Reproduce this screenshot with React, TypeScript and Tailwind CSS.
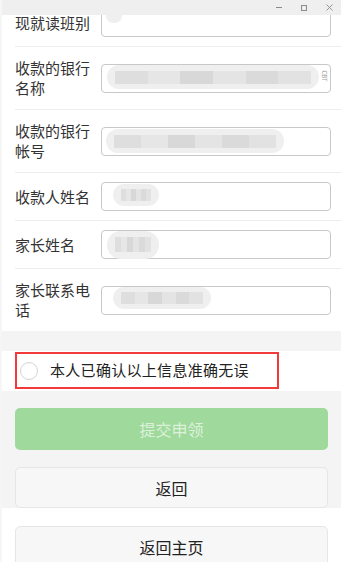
import React from 'react';

type Row = { label: string[]; blur: { w: number; h: number; ml: number; mt?: number }; cbt?: boolean };

const ROWS: Row[] = [
  { label: ['现就读班别'], blur: { w: 16, h: 14, ml: 4, mt: -14 } },
  { label: ['收款的银行', '名称'], blur: { w: 212, h: 24, ml: 5, mt: -2 }, cbt: true },
  { label: ['收款的银行', '帐号'], blur: { w: 178, h: 24, ml: 4 } },
  { label: ['收款人姓名'], blur: { w: 46, h: 22, ml: 11, mt: -4 } },
  { label: ['家长姓名'], blur: { w: 52, h: 28, ml: 5 } },
  { label: ['家长联系电', '话'], blur: { w: 98, h: 22, ml: 11, mt: -4 } },
];

function Blur({ w, h, ml, mt = 0 }: Row['blur']) {
  return (
    <div
      className="relative rounded-full bg-[#efefef] blur-[0.6px] flex items-center px-[8px]"
      style={{ width: w, height: h, marginLeft: ml, marginTop: mt }}
    >
      <div className="w-full flex" style={{ height: Math.max(6, Math.round(h * 0.55)) }}>
        <div className="flex-1 bg-[#dedede]" />
        <div className="flex-1 bg-[#e6e6e6]" />
        <div className="flex-1 bg-[#d8d8d8]" />
        <div className="flex-1 bg-[#e4e4e4]" />
        <div className="flex-1 bg-[#dadada]" />
        <div className="flex-1 bg-[#e2e2e2]" />
      </div>
    </div>
  );
}

export default function App() {
  return (
    <div
      className="relative h-[562px] overflow-hidden bg-[#f4f4f4] border-l-2 border-[#f6f6f6] text-[#333]"
      style={{ fontFamily: '"Noto Sans CJK SC", "Noto Sans", sans-serif' }}
    >
      {/* window chrome */}
      <div className="absolute top-0 inset-x-0 z-10 h-[15px] bg-[#efefef] flex items-center justify-end pr-[8px] gap-[19px] text-[#8a8a8a]">
        <div className="w-[6px] h-px bg-[#8a8a8a]" />
        <div className="w-[6px] h-[6px] border border-[#8a8a8a]" />
        <svg width="7" height="7" viewBox="0 0 7 7" stroke="#8a8a8a" strokeWidth="0.9">
          <path d="M0.5 0.5L6.5 6.5M6.5 0.5L0.5 6.5" />
        </svg>
      </div>

      <div className="-mt-px bg-white pl-[13px]">
        {ROWS.map((row, i) => (
          <div
            key={i}
            className={`flex items-center py-[9px] pr-[10px] ${i < ROWS.length - 1 ? 'border-b border-[#eeeeee]' : ''}`}
          >
            <div className="w-[86px] shrink-0 text-[15px] leading-[20px] py-[2px]">
              {row.label.map(l => <div key={l}>{l}</div>)}
            </div>
            <div className="relative flex-1 h-[29px] rounded-[4px] border border-[#c8c8c8] bg-white flex items-center">
              <Blur {...row.blur} />
              {row.cbt && (
                <span className="absolute right-[1px] top-[8px] text-[6px] leading-none text-[#999] rotate-90">CBT</span>
              )}
            </div>
          </div>
        ))}
      </div>

      <div className="mt-[20px] bg-white h-[40px] pl-[13px] pt-px">
        <div className="w-[264px] h-[37px] border-2 border-[#f23a3a] flex items-center pl-[3px]">
          <div className="w-[18px] h-[18px] rounded-full border border-[#d4d4d4] bg-white" />
          <span className="ml-[12px] text-[15px] tracking-[0.3px] text-[#222]">本人已确认以上信息准确无误</span>
        </div>
      </div>

      <div className="pl-[13px] pr-[13px] pt-[17px]">
        <button className="w-full h-[42px] rounded-[5px] bg-[#9fd99c] text-[16px] text-[#dcf1da]">提交申领</button>
        <button className="mt-[17px] w-full h-[41px] rounded-[5px] bg-[#f7f7f7] border border-[#e6e6e6] text-[16px] text-[#222]">返回</button>
      </div>

      <div className="bg-white pl-[13px] pr-[13px] pt-[18px] h-[100px]">
        <button className="w-full h-[41px] rounded-[5px] bg-[#f7f7f7] border border-[#e6e6e6] text-[16px] text-[#222]">返回主页</button>
      </div>
    </div>
  );
}
